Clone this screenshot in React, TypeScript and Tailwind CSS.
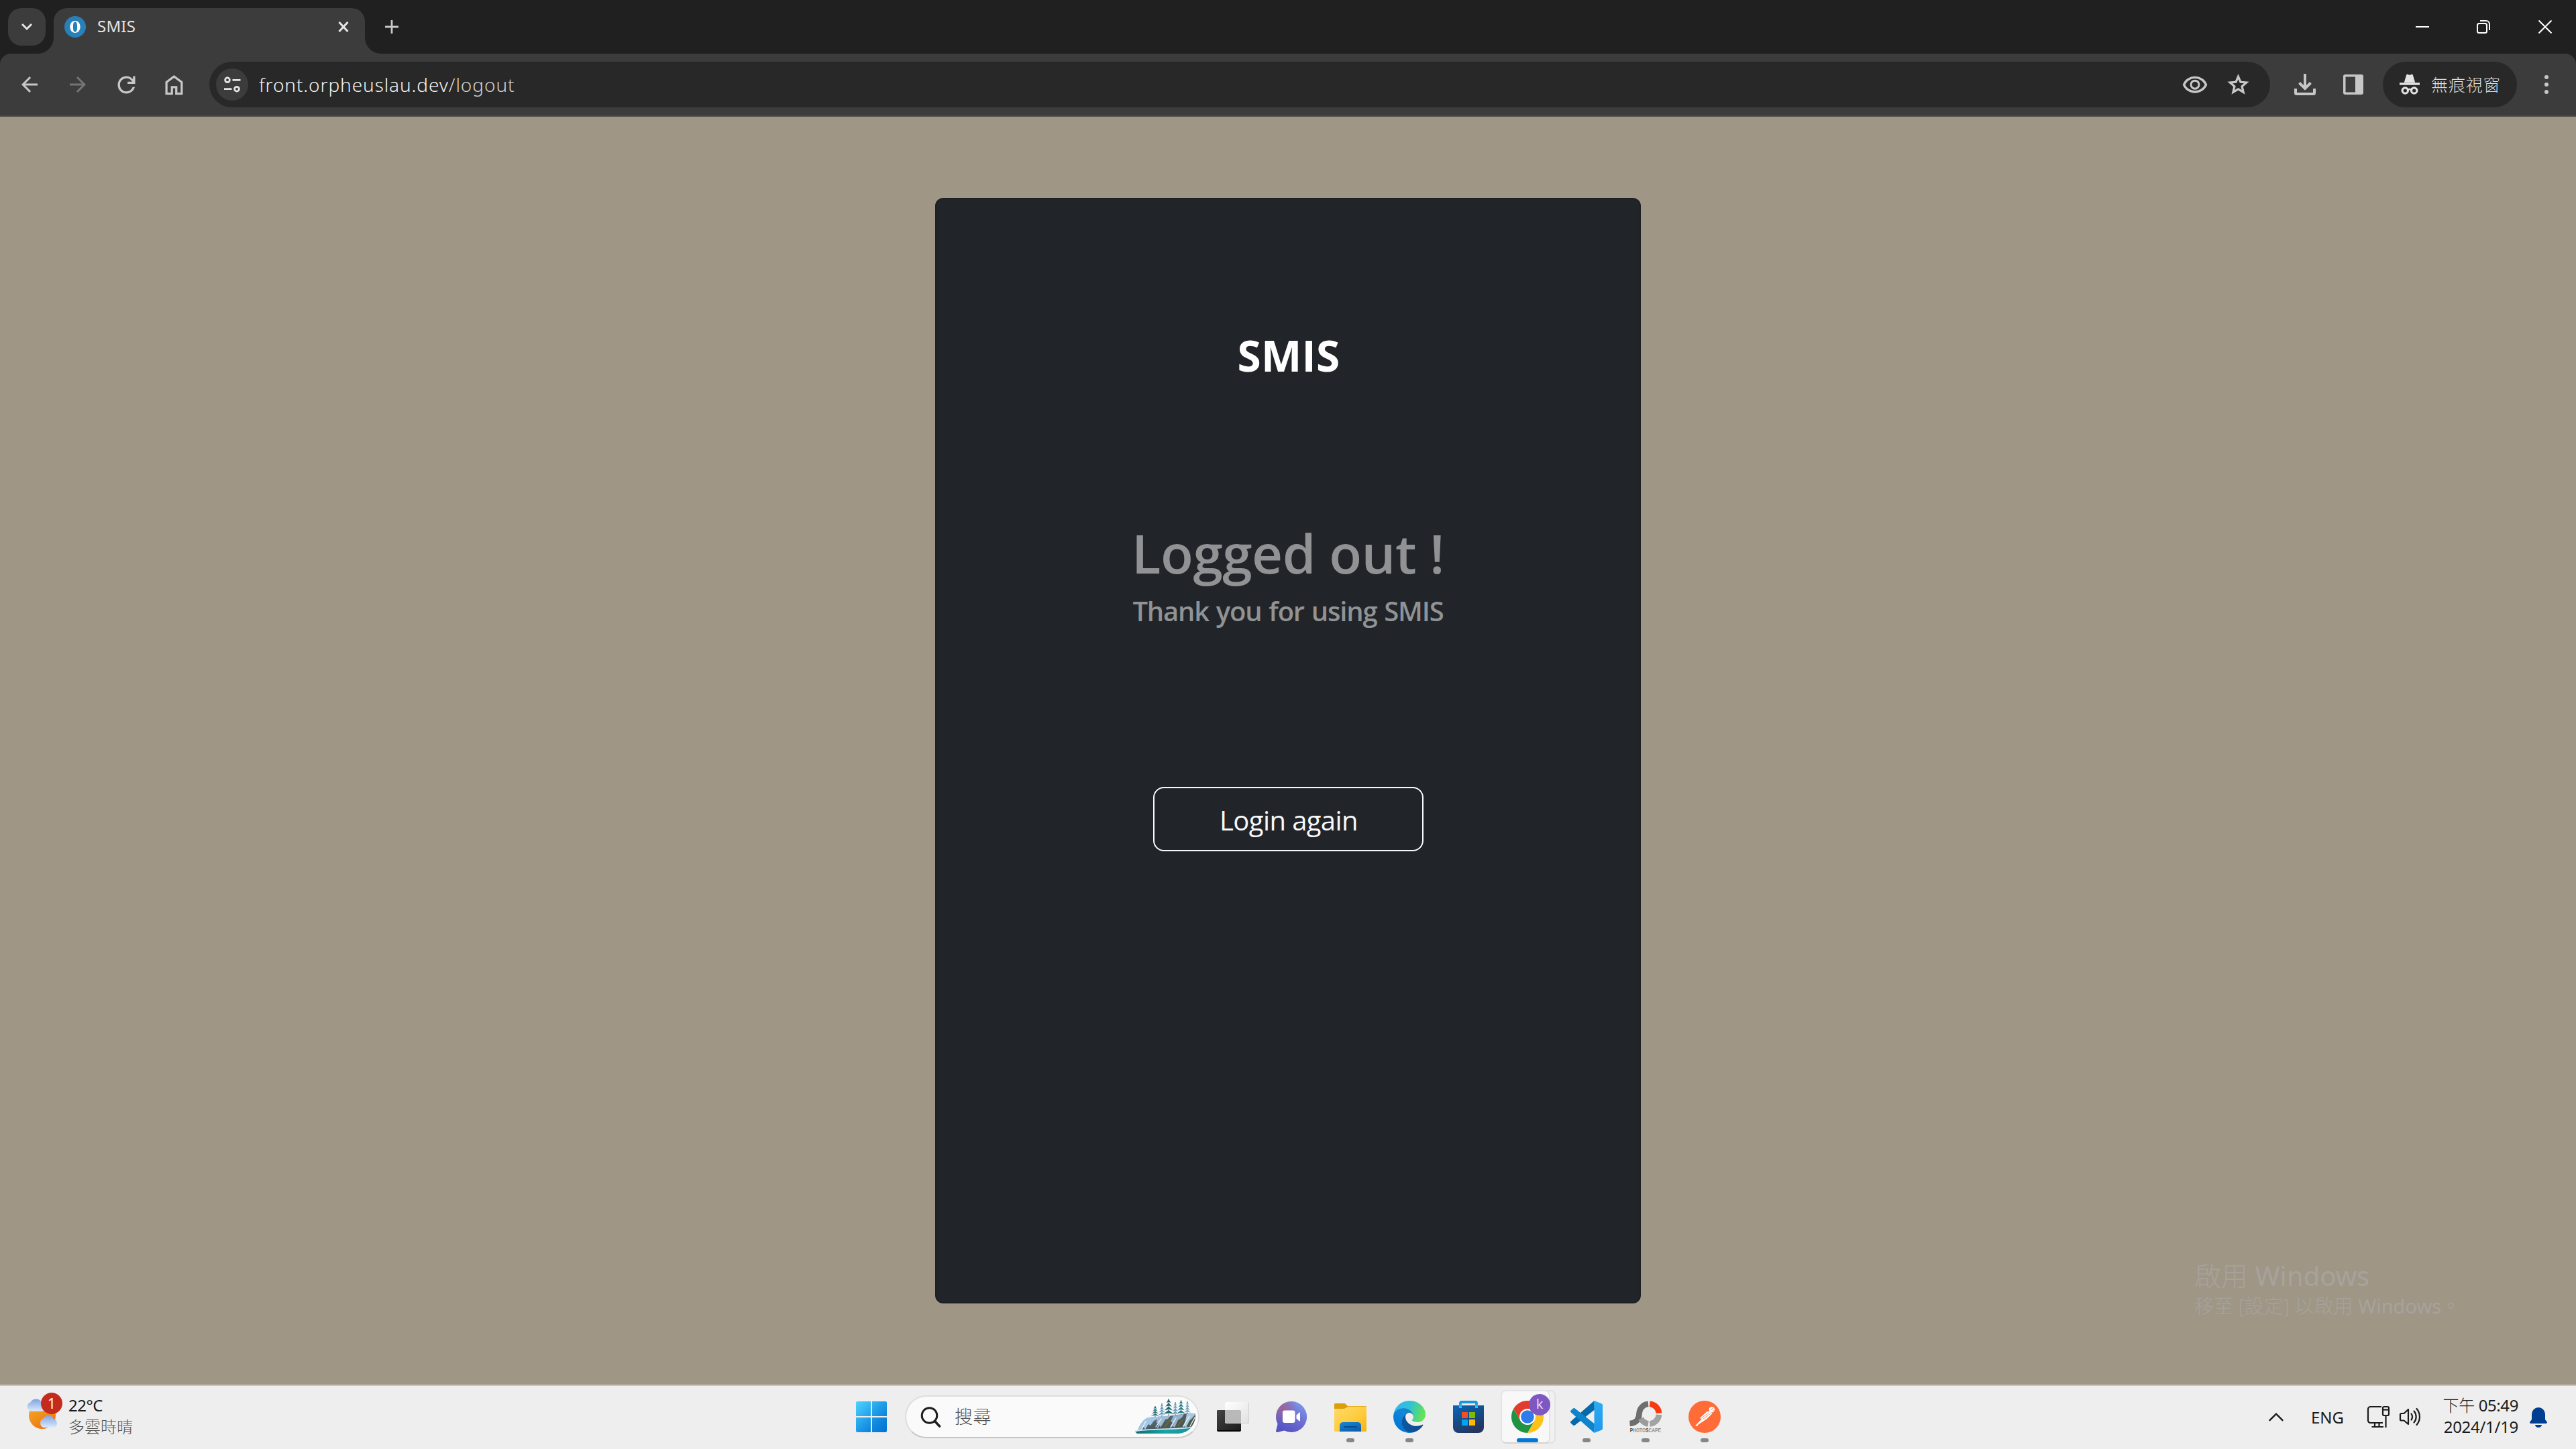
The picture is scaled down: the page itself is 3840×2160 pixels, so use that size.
import type { ReactNode } from "react";

/* ---------- Browser chrome icons ---------- */

function Symbol({ d, size, className = "" }: { d: string; size: number; className?: string }) {
  return (
    <svg width={size} height={size} viewBox="0 -960 960 960" fill="currentColor" className={"shrink-0 " + className}>
      <path d={d} />
    </svg>
  );
}

const REFRESH =
  "M480-160q-134 0-227-93t-93-227q0-134 93-227t227-93q69 0 132 28.5T720-690v-110h80v280H520v-80h168q-32-56-87.5-88T480-720q-100 0-170 70t-70 170q0 100 70 170t170 70q77 0 139-44t87-116h84q-28 106-114 173t-196 67Z";
const HOME =
  "M240-200h120v-240h240v240h120v-360L480-740 240-560v360Zm-80 80v-480l320-240 320 240v480H520v-240h-80v240H160Zm320-350Z";
const STAR =
  "m354-247 126-76 126 77-33-144 111-96-146-13-58-136-58 135-146 13 111 97-33 143ZM233-80l65-281L80-550l288-25 112-265 112 265 288 25-218 189 65 281-247-149L233-80Zm247-350Z";
const EYE =
  "M480-320q75 0 127.5-52.5T660-500q0-75-52.5-127.5T480-680q-75 0-127.5 52.5T300-500q0 75 52.5 127.5T480-320Zm0-72q-45 0-76.5-31.5T372-500q0-45 31.5-76.5T480-608q45 0 76.5 31.5T588-500q0 45-31.5 76.5T480-392Zm0 192q-146 0-266-81.5T40-500q54-137 174-218.5T480-800q146 0 266 81.5T920-500q-54 137-174 218.5T480-200Zm0-300Zm0 220q113 0 207.5-59.5T832-500q-50-101-144.5-160.5T480-720q-113 0-207.5 59.5T128-500q50 101 144.5 160.5T480-280Z";

function Arrow({ className }: { className: string }) {
  return (
    <svg width="36" height="36" viewBox="0 0 24 24" fill="currentColor" className={className}>
      <path d="M20 11H7.83l5.59-5.59L12 4l-8 8 8 8 1.41-1.41L7.83 13H20v-2z" />
    </svg>
  );
}

function TabStrip() {
  return (
    <div className="flex h-20 items-start bg-[#202020] pl-3 pt-3">
      <div className="flex size-14 items-center justify-center rounded-[20px] bg-[#3c3c3c] text-[#e3e3e3]">
        <svg width="20" height="14" viewBox="0 0 20 14" fill="none" stroke="currentColor" strokeWidth="3">
          <path d="M3 3l7 7 7-7" />
        </svg>
      </div>
      <div className="relative ml-3 h-[68px] w-[464px] rounded-t-[20px] bg-[#3c3c3c] text-[#3c3c3c]">
        <svg width="24" height="24" className="absolute -left-6 bottom-0" fill="currentColor">
          <path d="M24 0v24H0A24 24 0 0 0 24 0z" />
        </svg>
        <svg width="24" height="24" className="absolute -right-6 bottom-0" fill="currentColor">
          <path d="M0 0v24h24A24 24 0 0 1 0 0z" />
        </svg>
        <div className="flex h-14 items-center pl-4 pr-[25px]">
          <div className="flex size-8 items-center justify-center rounded-full bg-[#2980b9]">
            <svg width="16" height="20" viewBox="0 0 16 20">
              <path
                fill="#fff"
                fillRule="evenodd"
                d="M8 1c4.600 0 7.600 3.900 7.600 9S12.600 19 8 19 .4 15.100.4 10 3.400 1 8 1zm0 1.400C5.800 2.400 4.900 5 4.900 10s.9 7.600 3.100 7.600 3.100-2.600 3.100-7.600S10.200 2.400 8 2.400z"
              />
            </svg>
          </div>
          <span className="ml-[17px] pb-[2px] text-[24px] leading-8 tracking-[0.2px] text-[#e3e3e3]">SMIS</span>
          <svg width="16" height="18" viewBox="-1 -1 16 18" className="-mr-px ml-auto text-[#e3e3e3]" fill="none" stroke="currentColor" strokeWidth="3">
            <path d="M0.500 1l13 14M13.500 1L0.500 15" />
          </svg>
        </div>
      </div>
      <svg width="20" height="20" viewBox="0 0 20 20" className="ml-[30px] mt-[18px] text-[#c7c7c7]" stroke="currentColor" strokeWidth="2.800">
        <path d="M10 0v20M0 10h20" />
      </svg>
      <div className="ml-auto flex h-14 items-center pr-9 text-white">
        <svg width="20" height="20" viewBox="0 0 20 20" stroke="currentColor" strokeWidth="2">
          <path d="M0 10h20" />
        </svg>
        <svg width="20" height="20" viewBox="0 0 20 20" className="ml-[71px]" fill="none" stroke="currentColor" strokeWidth="2">
          <rect x="1" y="5" width="14" height="14" rx="2.500" />
          <path d="M5 1h9a5 5 0 0 1 5 5v9" />
        </svg>
        <svg width="20" height="20" viewBox="0 0 20 20" className="ml-[72px]" stroke="currentColor" strokeWidth="2">
          <path d="M0.500 0.500l19 19M19.500 0.500l-19 19" />
        </svg>
      </div>
    </div>
  );
}

function Toolbar() {
  return (
    <div className="bg-[#202020]">
      <div className="flex h-[94px] items-center rounded-t-2xl border-b-2 border-[#4a4a4a] bg-[#3c3c3c] pl-[26px] text-[#c7c7c7]">
        <Arrow className="shrink-0" />
        <Arrow className="ml-9 shrink-0 rotate-180 text-[#757575]" />
        <Symbol d={REFRESH} size={39} className="ml-[35px]" />
        <Symbol d={HOME} size={39} className="ml-[32px]" />
        <div className="ml-[33px] flex h-[68px] w-[3072px] items-center rounded-full bg-[#282828] pl-[10px] pr-[28px]">
          <div className="flex size-12 items-center justify-center rounded-full bg-[#3c3c3c] text-[#e3e3e3]">
            <svg width="26" height="24" viewBox="0 0 26 24" fill="none" stroke="currentColor" strokeWidth="2.800">
              <circle cx="6" cy="5.300" r="3.400" />
              <path d="M13.500 5.300h12M1 18.700h11.500" />
              <circle cx="20" cy="18.700" r="3.400" />
            </svg>
          </div>
          <span className="ml-4 pb-[1px] text-[28px] font-light leading-10 tracking-[0.900px] text-[#f2f2f2]">
            front.orpheuslau.dev<span className="text-[#cfcfcf]">/logout</span>
          </span>
          <Symbol d={EYE} size={40} className="ml-auto mt-[2px]" />
          <Symbol d={STAR} size={39} className="mb-[3px] ml-[25px]" />
        </div>
        <svg width="32" height="32" viewBox="0 0 32 32" fill="none" stroke="currentColor" className="ml-9 shrink-0">
          <path d="M16 0v22" strokeWidth="4" />
          <path d="M7.500 13.500L16 22l8.500-8.500" strokeWidth="4" />
          <path d="M2 22v6.500a1.500 1.500 0 0 0 1.500 1.500h25a1.500 1.500 0 0 0 1.500-1.500V22" strokeWidth="4" />
        </svg>
        <svg width="30" height="30" viewBox="0 0 30 30" className="ml-[41px] shrink-0">
          <path fill="currentColor" fillRule="evenodd" d="M3 0h24a3 3 0 0 1 3 3v24a3 3 0 0 1-3 3H3a3 3 0 0 1-3-3V3a3 3 0 0 1 3-3zm.5 3.500v23H18v-23z" />
        </svg>
        <div className="ml-[29px] flex h-[68px] w-[200px] shrink-0 items-center rounded-[34px] bg-[#282828] pl-6 text-[#e3e3e3]">
          <svg width="32" height="32" viewBox="0 0 32 32" fill="currentColor">
            <path d="M11 2.200c.4-1.300 1.500-1.700 2.600-1.200l2.400 1 2.400-1c1.100-.5 2.200-.1 2.600 1.200L24.200 13H7.800z" />
            <path d="M1 13.300h30v3.400H1z" />
            <g fill="none" stroke="currentColor">
              <circle cx="9.300" cy="25" r="4.200" strokeWidth="3.200" />
              <circle cx="22.700" cy="25" r="4.200" strokeWidth="3.200" />
              <path d="M13 24c2-1.300 4-1.300 6 0" strokeWidth="2.600" />
            </g>
          </svg>
          <span className="ml-[16px] whitespace-nowrap text-[25px] font-light leading-8 tracking-[0.900px] text-[#dcdcdc]">無痕視窗</span>
        </div>
        <svg width="8" height="30" viewBox="0 0 8 30" fill="currentColor" className="ml-10 shrink-0">
          <circle cx="4" cy="4" r="3" />
          <circle cx="4" cy="15" r="3" />
          <circle cx="4" cy="26" r="3" />
        </svg>
      </div>
    </div>
  );
}

/* ---------- Page ---------- */

function Page() {
  return (
    <main className="relative flex h-[1890px] items-center justify-center bg-[#9f9686] font-['Open_Sans','Noto_Sans_CJK_TC',sans-serif]">
      <section className="flex h-[1648px] w-[1052px] flex-col items-center rounded-xl border-2 border-[#1c1f23] bg-[#212529]">
        <h1 className="mt-[193px] pl-[2px] text-[64px] font-bold leading-[80px] tracking-[0.300px] text-white">SMIS</h1>
        <h2 className="mt-[206px] text-[80px] font-semibold leading-[96px] tracking-[-0.500px] text-[#909294]">Logged out !</h2>
        <h3 className="mt-[11px] text-[40px] font-semibold leading-[56px] tracking-[-1.200px] text-[#909294] [word-spacing:1.700px]">Thank you for using SMIS</h3>
        <button className="mt-[234px] h-24 w-[403px] rounded-2xl border-2 border-[#f8f9fa] pb-0 pl-[2px] pt-[3px] text-[40px] font-normal leading-[56px] tracking-[-0.600px] text-[#f8f9fa]">
          Login again
        </button>
      </section>
      {/* Windows activation notice floating above the page */}
      <div className="absolute left-[3271px] top-[1704px] font-['Noto_Sans','Noto_Sans_CJK_TC',sans-serif] text-[#a7a29c]">
        <div className="whitespace-nowrap text-[40px] font-light leading-[48px]">
          啟用 <span className="font-normal">Windows</span>
        </div>
        <div className="whitespace-nowrap text-[29px] font-light leading-[42px]">
          移至 [設定] 以啟用 <span className="font-normal">Windows</span>。
        </div>
      </div>
    </main>
  );
}

/* ---------- Taskbar ---------- */

function Tile({ children, indicator }: { children?: ReactNode; indicator?: "idle" | "active" }) {
  return (
    <div className="relative flex h-24 w-[88px] shrink-0 items-center justify-center">
      {children}
      {indicator === "idle" && <div className="absolute bottom-[10px] left-[38px] h-[6px] w-3 rounded-full bg-[#868686]" />}
      {indicator === "active" && <div className="absolute bottom-[10px] left-[28px] h-[6px] w-8 rounded-full bg-[#0078d4]" />}
    </div>
  );
}

function WeatherIcon() {
  const cloud = "M8 18a7 7 0 0 1-1-13.500A9.500 9.500 0 0 1 24 5.500 6.500 6.500 0 0 1 25 18z";
  return (
    <svg width="64" height="80" viewBox="0 0 64 80">
      <defs>
        <linearGradient id="sun" x1="0" y1="0" x2="0.600" y2="1">
          <stop offset="0" stopColor="#f0b429" />
          <stop offset="1" stopColor="#f0730f" />
        </linearGradient>
        <linearGradient id="cloud" x1="0" y1="0" x2="0" y2="1">
          <stop offset="0" stopColor="#7fa3de" />
          <stop offset="1" stopColor="#dbe9fd" />
        </linearGradient>
      </defs>
      <circle cx="27" cy="38" r="20" fill="url(#sun)" />
      <path d={cloud} fill="url(#cloud)" transform="translate(2.500 13.700)" />
      <path d={cloud} fill="url(#cloud)" transform="translate(22 38) scale(0.920 1)" />
      <circle cx="41" cy="20" r="16" fill="#c42b1c" />
      <text x="41" y="27.500" textAnchor="middle" fontSize="21" fill="#fff" fontFamily="Noto Sans">1</text>
    </svg>
  );
}

/* A conifer made of stacked snow-tipped boughs, standing on (x, y). */
function Tree({ x, y, h, w, c }: { x: number; y: number; h: number; w: number; c: string }) {
  const rows = [0.22, 0.44, 0.66, 0.88];
  return (
    <g>
      <path d={`M${x} ${y - h}V${y + 2}`} stroke="#6b5a4a" strokeWidth="1" />
      {rows.map((r) => {
        const half = (w / 2) * (0.25 + r * 0.85);
        const ty = y - h + h * r;
        const up = h * 0.2;
        return (
          <g key={r}>
            <path d={`M${x} ${ty - up}L${x + half} ${ty + 1}L${x} ${ty - 0.2}L${x - half} ${ty + 1}Z`} fill={c} />
            <path d={`M${x - half} ${ty + 1.2}L${x} ${ty}L${x + half} ${ty + 1.2}`} stroke="#d9eef8" strokeWidth="0.8" fill="none" />
          </g>
        );
      })}
    </g>
  );
}

function WinterScene() {
  return (
    <svg width="92" height="54" viewBox="0 0 92 54">
      <defs>
        <clipPath id="pill">
          <path d="M0 0H64A27 27 0 0 1 91 24V27A27 27 0 0 1 66 52H0z" />
        </clipPath>
        <linearGradient id="rock" x1="0" y1="0" x2="1" y2="1">
          <stop offset="0" stopColor="#6d8ba5" />
          <stop offset="0.500" stopColor="#4c5a60" />
          <stop offset="1" stopColor="#445444" />
        </linearGradient>
        <linearGradient id="lake" x1="0" y1="0" x2="1" y2="0">
          <stop offset="0" stopColor="#0e6c72" />
          <stop offset="0.500" stopColor="#18a5a5" />
          <stop offset="1" stopColor="#1b8e96" />
        </linearGradient>
      </defs>
      <Tree x={31} y={27} h={16} w={13} c="#226a76" />
      <Tree x={41} y={26} h={19} w={11} c="#5f9aba" />
      <Tree x={51} y={25} h={25} w={16} c="#1f666d" />
      <Tree x={61} y={25} h={20} w={11} c="#5f9aba" />
      <Tree x={69.5} y={24} h={22} w={13} c="#287882" />
      <Tree x={79} y={22} h={18} w={10} c="#6ba1bf" />
      <g clipPath="url(#pill)">
        <path d="M5 47C9 38 13 30 22 28L58 25 78 22 92 22V50H5z" fill="url(#rock)" />
        <path d="M5 47C9 38 13 30 22 28L36 26.500 33 31 29 33 24 40 21 38 16 46 14 42 11 47z" fill="#a3c7e6" />
        <path d="M34 27L54 25 50 30 46 31 39 43 38 40 33 46 36 37 33 36z" fill="#b0d2ed" opacity="0.800" />
        <path d="M58 25.500L74 22.500 71 28 65 32 60 43 57 41 53 45 57 36 54 34z" fill="#a3c7e6" opacity="0.800" />
        <path d="M78 22.500L92 22 87 28 82 33 77 43 74 41 71 45 76 33z" fill="#bbd9f0" opacity="0.850" />
        <path d="M17 34L11 45M40 30L32 42M62 29L54 42M82 26L73 41M90 28L83 41" stroke="#eef7fe" strokeWidth="1.300" fill="none" strokeLinecap="round" />
        <path d="M46 41L52 33M65 40L71 32" stroke="#63643a" strokeWidth="3" fill="none" strokeLinecap="round" />
        <path d="M1 49C20 44 66 46 92 42V54H6z" fill="url(#lake)" />
        <path d="M1 48.500C22 44 62 47 92 42" fill="none" stroke="#cfeaf5" strokeWidth="1.800" />
      </g>
    </svg>
  );
}

function StartIcon() {
  return (
    <svg width="46" height="46" viewBox="0 0 46 46">
      <defs>
        <linearGradient id="start" gradientUnits="userSpaceOnUse" x1="0" y1="0" x2="46" y2="46">
          <stop offset="0" stopColor="#4fd4ff" />
          <stop offset="0.500" stopColor="#1e9be8" />
          <stop offset="0.700" stopColor="#0f86dc" />
          <stop offset="1" stopColor="#0074d1" />
        </linearGradient>
      </defs>
      <path fill="url(#start)" d="M2 0h20v22H0V2a2 2 0 0 1 2-2zM24 0h20a2 2 0 0 1 2 2v20H24zM0 24h22v22H2a2 2 0 0 1-2-2zM24 24h22v20a2 2 0 0 1-2 2H24z" />
    </svg>
  );
}

function TaskViewIcon() {
  return (
    <svg width="48" height="48" viewBox="0 0 48 48" className="ml-[2px]">
      <defs>
        <linearGradient id="tvDark" x1="0" y1="0" x2="1" y2="1">
          <stop offset="0" stopColor="#444" />
          <stop offset="1" stopColor="#1c1c1c" />
        </linearGradient>
        <linearGradient id="tvLight" x1="0" y1="0" x2="1" y2="1">
          <stop offset="0" stopColor="#fff" />
          <stop offset="1" stopColor="#e2e2e2" />
        </linearGradient>
      </defs>
      <rect x="0" y="14" width="36" height="32" rx="2" fill="#050505" />
      <rect x="0" y="14" width="36" height="30" rx="2" fill="url(#tvDark)" />
      <rect x="12" y="2" width="36" height="32" rx="2" fill="#d2d2d2" />
      <rect x="12" y="2" width="35" height="31" rx="2" fill="url(#tvLight)" />
      <path d="M12 14h22a2 2 0 0 1 2 2v17H14a2 2 0 0 1-2-2z" fill="#b9b9b9" />
    </svg>
  );
}

function ChatIcon() {
  const bubble = "M23 0a23 23 0 1 1-10.500 43.400L2.500 46C.8 46.400-.4 45 .2 43.400L2.600 33.500A23 23 0 0 1 23 0z";
  return (
    <svg width="46" height="46" viewBox="0 0 46 46">
      <defs>
        <linearGradient id="chat" x1="0.900" y1="0" x2="0.300" y2="1">
          <stop offset="0" stopColor="#7ba0f0" />
          <stop offset="0.500" stopColor="#6f6fd0" />
          <stop offset="1" stopColor="#5552c4" />
        </linearGradient>
        <radialGradient id="chatRed" cx="0.200" cy="0.200" r="0.500">
          <stop offset="0" stopColor="#a8608c" stopOpacity="0.800" />
          <stop offset="1" stopColor="#a8608c" stopOpacity="0" />
        </radialGradient>
      </defs>
      <path d={bubble} fill="url(#chat)" />
      <path d={bubble} fill="url(#chatRed)" />
      <rect x="10" y="13.500" width="18.500" height="18.500" rx="3" fill="#fff" />
      <path d="M30.500 20.500l3.800-3.600c.7-.7 1.700-.3 1.700.7v10.800c0 1-1 1.400-1.700.7l-3.800-3.600z" fill="#fff" />
    </svg>
  );
}

function ExplorerIcon() {
  return (
    <svg width="48" height="48" viewBox="0 0 48 48">
      <defs>
        <linearGradient id="folder" x1="0" y1="0" x2="1" y2="1">
          <stop offset="0" stopColor="#ffdb6b" />
          <stop offset="0.600" stopColor="#ffca3a" />
          <stop offset="1" stopColor="#f5b20f" />
        </linearGradient>
        <linearGradient id="drawer" x1="0" y1="0" x2="0.600" y2="1">
          <stop offset="0" stopColor="#1488d8" />
          <stop offset="1" stopColor="#0f5fae" />
        </linearGradient>
      </defs>
      <path d="M0 5.500A1.500 1.500 0 0 1 1.500 4H14c1.500 0 2.500.4 3.500 1.500L20 8h26.500A1.500 1.500 0 0 1 48 9.500V16H0z" fill="#dc9f0c" />
      <path d="M0 12h12c3 0 4-.4 6-1.800 1.500-1.200 2.500-1.400 4-1.400h24.500A1.500 1.500 0 0 1 48 10.300V44.500a1.500 1.500 0 0 1-1.500 1.500h-45A1.500 1.500 0 0 1 0 44.500z" fill="url(#folder)" />
      <path d="M8 46V37a5 5 0 0 1 5-5h22a5 5 0 0 1 5 5v9z" fill="url(#drawer)" />
      <rect x="14" y="38" width="20" height="2" rx="1" fill="#0a4a86" />
    </svg>
  );
}

function EdgeIcon() {
  return (
    <svg width="48" height="48" viewBox="4.630 4.920 256 256">
      <defs>
        <linearGradient id="edgeA" gradientUnits="userSpaceOnUse" x1="63" y1="177" x2="241" y2="177">
          <stop offset="0" stopColor="#0c59a4" />
          <stop offset="1" stopColor="#114a8b" />
        </linearGradient>
        <linearGradient id="edgeB" gradientUnits="userSpaceOnUse" x1="157" y1="100" x2="46" y2="221">
          <stop offset="0" stopColor="#1b7fc4" />
          <stop offset="0.300" stopColor="#1486d8" />
          <stop offset="1" stopColor="#0078d8" />
        </linearGradient>
        <linearGradient id="edgeC" gradientUnits="userSpaceOnUse" x1="20" y1="60" x2="250" y2="130">
          <stop offset="0" stopColor="#35b5ee" />
          <stop offset="0.450" stopColor="#30c2d6" />
          <stop offset="0.750" stopColor="#4fd584" />
          <stop offset="1" stopColor="#66e64f" />
        </linearGradient>
      </defs>
      <path fill="url(#edgeA)" d="M235.680 195.460a93.730 93.730 0 0 1-10.540 4.710 101.870 101.870 0 0 1-35.900 6.460c-47.320 0-88.540-32.550-88.540-74.320A31.480 31.480 0 0 1 117.130 105c-42.800 1.800-53.800 46.400-53.800 72.530 0 73.880 68.090 81.370 82.760 81.370 7.910 0 19.840-2.300 27-4.560l1.310-.44a128.340 128.340 0 0 0 66.600-52.800 4 4 0 0 0-5.320-5.640Z" />
      <path fill="url(#edgeB)" d="M110.340 246.340A79.200 79.200 0 0 1 87.600 225a80.720 80.720 0 0 1 29.530-120c3.120-1.470 8.450-4.130 15.540-4a32.350 32.350 0 0 1 25.690 13 31.880 31.880 0 0 1 6.360 18.660c0-.21 24.460-79.600-80-79.600-43.900 0-80 41.660-80 78.210a130.150 130.150 0 0 0 12.110 56 128 128 0 0 0 156.380 67.110 75.550 75.550 0 0 1-62.780-8Z" />
      <path fill="url(#edgeC)" d="M156.940 153.780c-.81 1.050-3.300 2.500-3.300 5.660 0 2.610 1.700 5.120 4.720 7.230 14.380 10 41.490 8.680 41.560 8.680a59.560 59.560 0 0 0 30.270-8.350 61.380 61.380 0 0 0 30.430-52.880c.26-22.410-8-37.310-11.340-43.910C228.090 28.760 182.350 4.920 132.610 4.920a128 128 0 0 0-128 126.200c.48-36.540 36.800-66.050 80-66.050 3.500 0 23.460.34 42 10.070 16.340 8.580 24.900 18.940 30.850 29.210 6.180 10.670 7.280 24.150 7.280 29.520s-2.740 13.330-7.800 19.910Z" />
    </svg>
  );
}

function StoreIcon() {
  return (
    <svg width="46" height="48" viewBox="0 0 46 48">
      <defs>
        <linearGradient id="bag" x1="0.200" y1="0" x2="0.700" y2="1">
          <stop offset="0" stopColor="#0b62b4" />
          <stop offset="0.500" stopColor="#174a86" />
          <stop offset="1" stopColor="#27335a" />
        </linearGradient>
        <linearGradient id="handle" x1="0" y1="0" x2="0" y2="1">
          <stop offset="0" stopColor="#1196e0" />
          <stop offset="1" stopColor="#2ccdf5" />
        </linearGradient>
      </defs>
      <path d="M0 7h46v33a8 8 0 0 1-8 8H8a8 8 0 0 1-8-8z" fill="url(#bag)" />
      <path d="M11 11V4a2 2 0 0 1 2-2h20a2 2 0 0 1 2 2v7" fill="none" stroke="url(#handle)" strokeWidth="4" />
      <path d="M13 17h9v9h-9z" fill="#f25022" />
      <path d="M24 17h9v9h-9z" fill="#7fba00" />
      <path d="M13 28h9v9h-9z" fill="#00a4ef" />
      <path d="M24 28h9v9h-9z" fill="#ffb900" />
    </svg>
  );
}

function ChromeTile() {
  return (
    <>
      <div className="absolute left-[8px] top-[8px] h-20 w-[78px] rounded-lg border-2 border-[#e2e2e2] bg-[#f1f1f1]" />
      <div className="absolute left-[4px] top-[8px] h-20 w-[74px] rounded-lg border-2 border-[#e4e4e4] border-b-[#d4d4d4] bg-[#f8f8f8]" />
      <svg width="48" height="48" viewBox="0 0 48 48" className="relative">
        <path d="M24 12H44.780A24 24 0 0 0 3.220 12L13.600 30z" fill="#e33b2e" />
        <path d="M44.780 12A24 24 0 0 1 24 48L34.390 30 24 12z" fill="#fcc215" />
        <path d="M3.220 12A24 24 0 0 0 24 48L34.390 30H13.600z" fill="#229342" />
        <circle cx="24" cy="24" r="12" fill="#fff" />
        <circle cx="24" cy="24" r="9.800" fill="#2f7bea" />
      </svg>
      <div className="absolute left-[46px] top-[14px] flex size-8 items-center justify-center rounded-full bg-[#7e57c2] pb-[2px] text-[20px] leading-none text-[#e4dcf2]">k</div>
    </>
  );
}

function VsCodeIcon() {
  return (
    <svg width="48" height="48" viewBox="0 0 48 48">
      <defs>
        <linearGradient id="vsBar" x1="0" y1="0" x2="0" y2="1">
          <stop offset="0" stopColor="#2aaef0" />
          <stop offset="1" stopColor="#2196ee" />
        </linearGradient>
      </defs>
      <path d="M35.500 0L.9 30.600a2.200 2.200 0 0 0 0 3.200L4 36.500c.8.7 1.900.7 2.700.1L36 13.500z" fill="#0569ab" />
      <path d="M35.500 48L.9 17.400a2.200 2.200 0 0 1 0-3.200L4 11.500c.8-.7 1.900-.7 2.700-.1L36 34.500z" fill="#0d84cb" />
      <path d="M35.500 0l10.800 4.200A2.600 2.600 0 0 1 48 6.600v34.800a2.600 2.600 0 0 1-1.700 2.400L35.500 48z" fill="url(#vsBar)" />
    </svg>
  );
}

function PhotoScapeIcon() {
  return (
    <svg width="48" height="52" viewBox="0 -2 48 52" fill="none" strokeWidth="8.600" className="overflow-visible">
      <path d="M28 4.800A15 15 0 0 0 14.500 19C14.500 28 10 33.500.5 34" stroke="#6e6e6e" />
      <path d="M30.200 4.800A15 15 0 0 1 44 18.600" stroke="#f93a10" />
      <path d="M44 20.800A15 15 0 0 1 30.200 34.500" stroke="#a3a3a3" />
      <path d="M28 34.500A15 15 0 0 1 17 26.500" stroke="#9c9c9c" />
      <text x="0.800" y="47" fontSize="9.500" fontWeight="700" textLength="46" lengthAdjust="spacingAndGlyphs" fill="#8c8c8c" fontFamily="Liberation Sans">
        <tspan fill="#4a4a4a">P</tspan>HOTO<tspan fill="#4a4a4a">S</tspan>CAPE
      </text>
    </svg>
  );
}

function PostmanIcon() {
  return (
    <svg width="48" height="48" viewBox="0 0 48 48">
      <circle cx="24" cy="24" r="24" fill="#ff6c37" />
      <circle cx="34.800" cy="13.300" r="4.200" fill="#fff" />
      <path d="M33 13.800l3.800-2.600M36 15.500l1.800-1.600" stroke="#ff6c37" strokeWidth="0.900" />
      <path d="M31 15.500L35.500 19 27.500 27 13.500 36.300 14.500 37.800 9.800 37.600 12.500 34.800 19.800 27.200 16.800 26 27.200 16.400z" fill="#fff" />
      <path d="M19.500 26L30 17.800M21.500 27.500L33 19" stroke="#ff6c37" strokeWidth="0.800" />
    </svg>
  );
}

function SystemTray() {
  return (
    <div className="flex items-center justify-end pr-10 text-[#1b1b1b]">
      <svg width="24" height="14" viewBox="0 0 24 14" fill="none" stroke="currentColor" strokeWidth="2.400" strokeLinecap="round">
        <path d="M2.500 12.200L12 2.600l9.500 9.600" />
      </svg>
      <span className="ml-10 w-[49px] pt-[2px] text-[24px] leading-8">ENG</span>
      <svg width="36" height="36" viewBox="0 0 36 36" fill="none" stroke="currentColor" strokeWidth="2.200" className="ml-[33px]">
        <path d="M23 3H6.500A3.500 3.500 0 0 0 3 6.500v17A3.500 3.500 0 0 0 6.500 27H25M13 27v6M19.500 27v6M8.500 33H26M29.500 17v17" />
        <rect x="25" y="3" width="9" height="13" rx="2" />
        <path d="M25 7.500h9" />
      </svg>
      <svg width="36" height="36" viewBox="0 0 36 36" fill="none" stroke="currentColor" strokeWidth="2.200" strokeLinejoin="round" strokeLinecap="round" className="ml-3">
        <path d="M3 14.500A1.500 1.500 0 0 1 4.500 13H8.500L15 7v22L8.500 23.500H4.500A1.500 1.500 0 0 1 3 22z" />
        <path d="M19.500 13.500a8 8 0 0 1 0 9M23.500 9.500a13 13 0 0 1 0 17M27.500 6a18.500 18.500 0 0 1 0 24" />
      </svg>
      <div className="mb-[2px] ml-[23px] w-[120px] whitespace-nowrap text-right text-[24px] leading-8">
        <div className="tracking-[-0.400px]">
          <span className="font-light">下午</span> 05:49
        </div>
        <div className="tracking-[-0.300px]">2024/1/19</div>
      </div>
      <svg width="32" height="32" viewBox="0 0 32 32" fill="#003e92" className="ml-[14px]">
        <path d="M16 2a10 10 0 0 1 10 10v8l2.600 3.600A1.500 1.500 0 0 1 27.400 26H4.600a1.500 1.500 0 0 1-1.200-2.400L6 20v-8A10 10 0 0 1 16 2z" />
        <path d="M11 28h10a5 4 0 0 1-10 0z" />
      </svg>
    </div>
  );
}

function Taskbar() {
  return (
    <div className="grid h-24 grid-cols-[1255px_1330px_1255px] items-center bg-[#eeeeee] shadow-[inset_0_2px_0_#c6c6c6]">
      <div className="flex items-center pl-9">
        <WeatherIcon />
        <div className="mb-[2px] ml-[2px] whitespace-nowrap text-[24px] leading-8">
          <div className="tracking-[-0.500px] text-[#1b1b1b]">22°C</div>
          <div className="font-light text-[#555555]">多雲時晴</div>
        </div>
      </div>
      <div className="flex items-center">
        <Tile>
          <StartIcon />
        </Tile>
        <div className="ml-[6px] mr-[5px] flex h-16 w-[439px] items-center rounded-full border-2 border-[#dedede] border-b-[#c6c6c6] bg-[#fafafa] pl-5">
          <svg width="32" height="34" viewBox="0 0 32 34" fill="none" stroke="#1f1f1f" strokeLinecap="round">
            <circle cx="14.500" cy="15" r="11.300" strokeWidth="3" />
            <path d="M22.500 23.500l7 7.500" strokeWidth="3.600" />
          </svg>
          <span className="ml-[20px] whitespace-nowrap text-[27px] font-light leading-9 tracking-[0.500px] text-[#555555]">搜尋</span>
          <div className="ml-auto mr-[3px]">
            <WinterScene />
          </div>
        </div>
        <Tile>
          <TaskViewIcon />
        </Tile>
        <Tile>
          <ChatIcon />
        </Tile>
        <Tile indicator="idle">
          <ExplorerIcon />
        </Tile>
        <Tile indicator="idle">
          <EdgeIcon />
        </Tile>
        <Tile>
          <StoreIcon />
        </Tile>
        <Tile indicator="active">
          <ChromeTile />
        </Tile>
        <Tile indicator="idle">
          <VsCodeIcon />
        </Tile>
        <Tile indicator="idle">
          <PhotoScapeIcon />
        </Tile>
        <Tile indicator="idle">
          <PostmanIcon />
        </Tile>
      </div>
      <SystemTray />
    </div>
  );
}

export default function App() {
  return (
    <div className="flex h-[2160px] w-[3840px] flex-col overflow-hidden font-['Noto_Sans','Noto_Sans_CJK_TC',sans-serif]">
      <TabStrip />
      <Toolbar />
      <Page />
      <Taskbar />
    </div>
  );
}
